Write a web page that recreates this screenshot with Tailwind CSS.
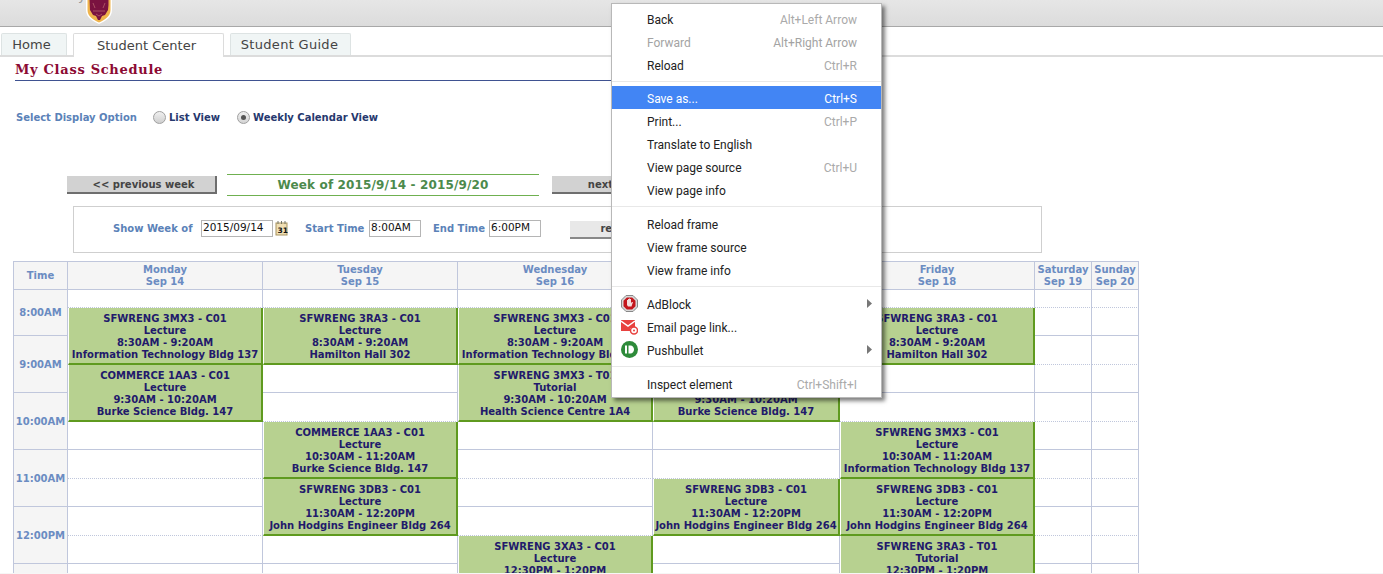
<!DOCTYPE html>
<html lang="en">
  <head>
    <meta charset="UTF-8" />
    <title>My Class Schedule</title>
    <script src="https://cdn.jsdelivr.net/npm/@tailwindcss/browser@4"></script>
  </head>
  <body class="relative h-[574px] overflow-hidden bg-[#f6f6f6] font-['DejaVu_Sans',sans-serif]">
    <main class="h-[573px] overflow-hidden bg-white">
      <!-- top banner -->
      <header class="flex h-[27px] items-start overflow-hidden border-b border-[#a8a8a8] bg-gradient-to-b from-[#e6e6e6] to-[#dcdcdc] pl-[20px]">
        <span class="-mt-[12px] w-[65px] text-[13px] leading-[16px] whitespace-nowrap text-[#999]">University</span>
        <svg class="h-[24px] w-[28px]" viewBox="0 0 28 24">
          <path d="M1 -2H27V10C27 17 21 21 14 24C7 21 1 17 1 10Z" fill="#fff" />
          <path d="M2.500 -2H25.500V10C25.500 16 20 20 14 22.500C8 20 2.500 16 2.500 10Z" fill="#efb44c" />
          <path d="M4.500 -2H23.500V5L23 10L20 15L17 16L15 20H13L11 16L8 15L5 10Z" fill="#7a1240" />
          <path d="M8 3L10 8M20 3L18 8M8 11H20M11 14L14 16L17 14" stroke="#b5606a" stroke-width=".8" fill="none" />
        </svg>
      </header>

      <!-- tabs -->
      <nav class="flex h-[30px] items-end gap-[6px] border-b-2 border-[#dcdcdc] pl-[1px] text-[13px] text-[#444]">
        <a class="flex h-[22px] w-[66px] items-center justify-center rounded-t-[2px] border border-b-0 border-[#dde3e3] bg-[#f0f5f5] pr-[5px]">Home</a>
        <a class="-mb-[2px] flex h-[24px] w-[151px] items-center justify-center rounded-t-[2px] border border-b-0 border-[#dcdcdc] bg-white pr-[4px]">Student Center</a>
        <a class="flex h-[22px] w-[121px] items-center justify-center rounded-t-[2px] border border-b-0 border-[#dde3e3] bg-[#f0f5f5] pr-[2px] tracking-[0.3px]">Student Guide</a>
      </nav>

      <h1 class="ml-[15px] h-[24px] w-[800px] border-b border-[#3f5291] pt-[4px] font-['DejaVu_Serif',serif] text-[13px] leading-[18px] font-bold tracking-[0.7px] text-[#8c0a33]">My Class Schedule</h1>

      <!-- display option -->
      <div class="mt-[28px] flex h-[17px] items-center pl-[16px] text-[10px] font-bold whitespace-nowrap">
        <span class="w-[137px] text-[#5b82b8]">Select Display Option</span>
        <span class="h-[13px] w-[13px] rounded-full border border-[#a0a0a0] bg-gradient-to-b from-[#f0f0f0] to-[#cfcfcf]"></span>
        <span class="ml-[3px] w-[68px] text-[#26386e]">List View</span>
        <span class="flex h-[13px] w-[13px] items-center justify-center rounded-full border border-[#a0a0a0] bg-gradient-to-b from-[#f0f0f0] to-[#d4d4d4]"><span class="h-[5px] w-[5px] rounded-full bg-[#555]"></span></span>
        <span class="ml-[3px] text-[#26386e]">Weekly Calendar View</span>
      </div>

      <!-- week navigation -->
      <div class="mt-[48px] flex h-[22px] items-center pl-[67px] text-[10px] font-bold whitespace-nowrap">
        <button class="h-[18px] w-[150px] border-r-2 border-b-2 border-[#6e6e6e] bg-[#d2d2d2] pl-[5px] text-[#444]">&lt;&lt; previous week</button>
        <div class="ml-[10px] flex h-[22px] w-[312px] items-center justify-center border-y border-[#6fb050] text-[12px] tracking-[0.15px] text-[#4c8a4c]">Week of 2015/9/14 - 2015/9/20</div>
        <button class="ml-[13px] h-[18px] w-[150px] border-b-2 border-[#6e6e6e] bg-[#d2d2d2] text-[#444]">next week &gt;&gt;</button>
      </div>

      <!-- date filter -->
      <div class="mt-[10px] ml-[73px] flex h-[47px] w-[969px] items-center border border-[#cfcfcf] pb-[3px] pl-[39px] text-[10px] font-bold whitespace-nowrap text-[#5b82b8]">
        <span class="w-[88px]">Show Week of</span>
        <span class="flex h-[17px] w-[72px] items-center border border-[#b5b5b5] pl-[1px] text-[10.500px] font-normal text-[#111]">2015/09/14</span>
        <svg class="ml-[2px] h-[15px] w-[13px]" viewBox="0 0 13 15">
          <rect x="1" y="2" width="11" height="12" fill="#f0dfb4" stroke="#a89460" />
          <path d="M3 0V3M6.500 0V3M10 0V3" stroke="#776" />
          <text x="2.500" y="11.500" font-size="7.500" font-weight="700" fill="#111">31</text>
        </svg>
        <span class="ml-[17px] w-[64px]">Start Time</span>
        <span class="flex h-[17px] w-[52px] items-center border border-[#b5b5b5] pl-[1px] text-[10.500px] font-normal text-[#111]">8:00AM</span>
        <span class="ml-[12px] w-[56px]">End Time</span>
        <span class="flex h-[17px] w-[52px] items-center border border-[#b5b5b5] pl-[1px] text-[10.500px] font-normal text-[#111]">6:00PM</span>
        <button class="mt-[3px] ml-[29px] h-[18px] w-[154px] border-b-2 border-[#888] bg-[#e8e8e8] text-[#444]">refresh calendar</button>
      </div>

      <!-- timetable -->
      <table id="schedule" class="mt-[8px] ml-[13px] w-[1126px] table-fixed border-separate border-spacing-0 border-t border-l border-[#c0c7dc] text-center text-[10px] leading-[12px] font-bold whitespace-nowrap">
        <colgroup>
          <col class="w-[54px]" /><col class="w-[195px]" /><col class="w-[195px]" /><col class="w-[195px]" /><col class="w-[187px]" /><col class="w-[195px]" /><col class="w-[57px]" /><col class="w-[47px]" />
        </colgroup>
        <thead>
          <tr class="h-[28px] text-[#6b8cc2]">
            <th class="border-r border-b border-[#c0c7dc] bg-[#f5f5f5]">Time</th>
            <th class="border-r border-b border-[#c0c7dc] bg-[#f5f5f5]">Monday<br />Sep 14</th>
            <th class="border-r border-b border-[#c0c7dc] bg-[#f5f5f5]">Tuesday<br />Sep 15</th>
            <th class="border-r border-b border-[#c0c7dc] bg-[#f5f5f5]">Wednesday<br />Sep 16</th>
            <th class="border-r border-b border-[#c0c7dc] bg-[#f5f5f5]">Thursday<br />Sep 17</th>
            <th class="border-r border-b border-[#c0c7dc] bg-[#f5f5f5]">Friday<br />Sep 18</th>
            <th class="border-r border-b border-[#c0c7dc] bg-[#f5f5f5]">Saturday<br />Sep 19</th>
            <th class="border-r border-b border-[#c0c7dc] bg-[#f5f5f5]">Sunday<br />Sep 20</th>
          </tr>
        </thead>
        <tbody id="scheduleBody"></tbody>
      </table>
    </main>

    <!-- browser context menu, open over the page -->
    <div class="absolute top-[3px] left-[611px] h-[395px] w-[271px] border border-[#b8b8b8] bg-white pt-[3px] font-['Roboto',sans-serif] text-[12px] text-[#222] shadow-[3px_3px_4px_rgba(0,0,0,0.5)]">
      <div class="flex h-[23px] items-center justify-between pt-[2px] pr-[24px] pl-[35px]"><span>Back</span><span class="text-[#aaa]">Alt+Left Arrow</span></div>
      <div class="flex h-[23px] items-center justify-between pt-[2px] pr-[24px] pl-[35px] text-[#a3a3a3]"><span>Forward</span><span>Alt+Right Arrow</span></div>
      <div class="flex h-[23px] items-center justify-between pt-[2px] pr-[24px] pl-[35px]"><span>Reload</span><span class="text-[#aaa]">Ctrl+R</span></div>
      <div class="flex h-[10px] items-center"><div class="h-[1px] w-full bg-[#e8e8e8]"></div></div>
      <div class="flex h-[23px] items-center justify-between bg-[#4285f4] pt-[2px] pr-[24px] pl-[35px] text-white"><span>Save as...</span><span>Ctrl+S</span></div>
      <div class="flex h-[23px] items-center justify-between pt-[2px] pr-[24px] pl-[35px]"><span>Print...</span><span class="text-[#aaa]">Ctrl+P</span></div>
      <div class="flex h-[23px] items-center justify-between pt-[2px] pr-[24px] pl-[35px]"><span>Translate to English</span></div>
      <div class="flex h-[23px] items-center justify-between pt-[2px] pr-[24px] pl-[35px]"><span>View page source</span><span class="text-[#aaa]">Ctrl+U</span></div>
      <div class="flex h-[23px] items-center justify-between pt-[2px] pr-[24px] pl-[35px]"><span>View page info</span></div>
      <div class="flex h-[11px] items-center"><div class="h-[1px] w-full bg-[#e8e8e8]"></div></div>
      <div class="flex h-[23px] items-center justify-between pt-[2px] pr-[24px] pl-[35px]"><span>Reload frame</span></div>
      <div class="flex h-[23px] items-center justify-between pt-[2px] pr-[24px] pl-[35px]"><span>View frame source</span></div>
      <div class="flex h-[23px] items-center justify-between pt-[2px] pr-[24px] pl-[35px]"><span>View frame info</span></div>
      <div class="flex h-[11px] items-center"><div class="h-[1px] w-full bg-[#e8e8e8]"></div></div>
      <div class="flex h-[23px] items-center pr-[9px] pl-[9px]">
        <svg class="h-[17px] w-[17px]" viewBox="0 0 17 17">
          <path d="M5 .5H12L16.500 5V12L12 16.500H5L.5 12V5Z" fill="#d8d8d8" stroke="#888" />
          <path d="M5.800 2.500H11.200L14.500 5.800V11.200L11.200 14.500H5.800L2.500 11.200V5.800Z" fill="#c4161c" />
          <path d="M6 7V5H7V7.500V4H8V7.500V3.500H9V7.500V4H10V8L11 7H12L10.500 11.500H7L6 10Z" fill="#f4dcdc" />
        </svg>
        <span class="ml-[9px] flex-1 pt-[2px]">AdBlock</span>
        <svg class="h-[9px] w-[5px]" viewBox="0 0 5 9"><path d="M0 0L5 4.500L0 9Z" fill="#777" /></svg>
      </div>
      <div class="flex h-[23px] items-center pr-[9px] pl-[9px]">
        <svg class="h-[17px] w-[17px]" viewBox="0 0 17 17">
          <path d="M0 2H14V9.500L9 10.500V13H0Z" fill="#e8423f" />
          <path d="M0 3L7 8L14 3" stroke="#fff" stroke-width="1.500" fill="none" />
          <circle cx="13" cy="12.500" r="3.500" fill="#fff" stroke="#e8423f" stroke-width="1.500" />
          <circle cx="13" cy="12.500" r="1" fill="#e8423f" />
        </svg>
        <span class="ml-[9px] flex-1 pt-[2px]">Email page link...</span>
      </div>
      <div class="flex h-[23px] items-center pr-[9px] pl-[9px]">
        <svg class="h-[17px] w-[17px]" viewBox="0 0 17 17">
          <circle cx="8.500" cy="8.500" r="8.500" fill="#2e8b3a" />
          <rect x="4" y="4.500" width="2" height="8" fill="#fff" />
          <path d="M7.500 4.500H9.500C11.500 4.500 13 6.300 13 8.500C13 10.700 11.500 12.500 9.500 12.500H7.500Z" fill="#fff" />
        </svg>
        <span class="ml-[9px] flex-1 pt-[2px]">Pushbullet</span>
        <svg class="h-[9px] w-[5px]" viewBox="0 0 5 9"><path d="M0 0L5 4.500L0 9Z" fill="#777" /></svg>
      </div>
      <div class="flex h-[11px] items-center"><div class="h-[1px] w-full bg-[#e8e8e8]"></div></div>
      <div class="flex h-[23px] items-center justify-between pt-[2px] pr-[24px] pl-[35px]"><span>Inspect element</span><span class="text-[#aaa]">Ctrl+Shift+I</span></div>
    </div>

    <script>
      const blankSolid = "border-r border-b border-[#c0c7dc]";
      const blankDotted = "border-r border-b border-[#c0c7dc] [border-bottom-style:dotted]";
      const firstTimeCell = "border-r border-b border-[#c0c7dc] bg-[#f5f5f5] text-[#6b8cc2]";
      const timeCell = "border-r border-b border-[#c0c7dc] bg-[#f5f5f5] pt-[2px] text-[#6b8cc2]";
      const classCell = "border-r-2 border-b-2 border-l border-[#5f9a1f] border-l-white bg-[#b7d190] pt-[5px] align-top text-[#221a6b]";
      const rowHeights = ["h-[18px]", "h-[28px]", "h-[29px]"];

      function lesson(name, kind, time, room) {
        return { name, kind, time, room };
      }

      const mx3 = lesson("SFWRENG 3MX3 - C01", "Lecture", "8:30AM - 9:20AM", "Information Technology Bldg 137");
      const ra3 = lesson("SFWRENG 3RA3 - C01", "Lecture", "8:30AM - 9:20AM", "Hamilton Hall 302");
      const comm = lesson("COMMERCE 1AA3 - C01", "Lecture", "9:30AM - 10:20AM", "Burke Science Bldg. 147");
      const db3 = lesson("SFWRENG 3DB3 - C01", "Lecture", "11:30AM - 12:20PM", "John Hodgins Engineer Bldg 264");

      // row index -> day column -> lesson, each lesson takes two half hour rows
      const lessons = {
        1: { 0: mx3, 1: ra3, 2: mx3, 4: ra3 },
        3: { 0: comm, 2: lesson("SFWRENG 3MX3 - T01", "Tutorial", "9:30AM - 10:20AM", "Health Science Centre 1A4"), 3: comm },
        5: { 1: lesson("COMMERCE 1AA3 - C01", "Lecture", "10:30AM - 11:20AM", "Burke Science Bldg. 147"), 4: lesson("SFWRENG 3MX3 - C01", "Lecture", "10:30AM - 11:20AM", "Information Technology Bldg 137") },
        7: { 1: db3, 3: db3, 4: db3 },
        9: { 2: lesson("SFWRENG 3XA3 - C01", "Lecture", "12:30PM - 1:20PM", "Burke Science Bldg. 147"), 4: lesson("SFWRENG 3RA3 - T01", "Tutorial", "12:30PM - 1:20PM", "Burke Science Bldg. 147") },
      };
      const hours = { 0: "8:00AM", 2: "9:00AM", 4: "10:00AM", 6: "11:00AM", 8: "12:00PM", 10: "1:00PM" };

      const body = document.getElementById("scheduleBody");
      const taken = {};
      for (let r = 0; r <= 10; r++) {
        const row = document.createElement("tr");
        row.className = r === 0 ? rowHeights[0] : r % 2 ? rowHeights[1] : rowHeights[2];

        if (hours[r]) {
          const time = document.createElement("td");
          time.className = r === 0 ? firstTimeCell : timeCell;
          time.rowSpan = 2;
          time.textContent = hours[r];
          row.appendChild(time);
        }

        for (let d = 0; d < 7; d++) {
          if (taken[`${r}_${d}`]) continue;
          const cell = document.createElement("td");
          const item = lessons[r] && lessons[r][d];
          if (item) {
            cell.className = classCell;
            cell.rowSpan = 2;
            cell.innerHTML = `${item.name}<br>${item.kind}<br>${item.time}<br>${item.room}`;
            taken[`${r + 1}_${d}`] = true;
          } else {
            cell.className = r % 2 ? blankSolid : blankDotted;
          }
          row.appendChild(cell);
        }
        body.appendChild(row);
      }
    </script>
  </body>
</html>
